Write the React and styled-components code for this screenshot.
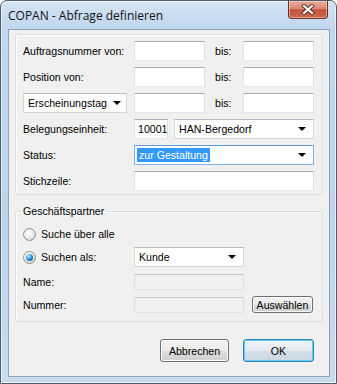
import styled, { createGlobalStyle } from "styled-components";

const GlobalStyle = createGlobalStyle`
  html, body { margin: 0; padding: 0; background: #fff; }
  body {
    font-family: "Liberation Sans", Arial, sans-serif;
    font-size: 10.6px;
    color: #000;
  }
`;

const Window = styled.div`
  width: 337px;
  height: 384px;
  box-sizing: border-box;
  display: flex;
  flex-direction: column;
  border: 1px solid #4f5b68;
  border-radius: 7px 7px 0 0;
  background: linear-gradient(180deg, #d4e4f4 0%, #c1d7ee 28px, #bdd4eb 60%, #c9dcef 100%);
  box-shadow: inset 0 0 0 1px rgba(255, 255, 255, 0.6);
  overflow: hidden;
`;

const TitleBar = styled.div`
  height: 28px;
  display: flex;
  align-items: flex-start;
  flex-shrink: 0;
`;

const Title = styled.div`
  align-self: center;
  padding-left: 7px;
  padding-top: 1px;
  font-family: "Open Sans", "Liberation Sans", sans-serif;
  font-size: 12px;
  color: #111;
`;

const CloseButton = styled.div`
  margin-left: auto;
  margin-right: 8px;
  width: 40px;
  height: 18px;
  box-sizing: border-box;
  border: 1px solid #6a3428;
  border-top: none;
  border-radius: 0 0 4px 4px;
  background: linear-gradient(180deg, #e8ad9e 0%, #d88a76 45%, #c5503a 52%, #cd6a50 100%);
  box-shadow: inset 0 0 0 1px rgba(255, 230, 220, 0.45);
  display: flex;
  align-items: center;
  justify-content: center;
`;

const Client = styled.div`
  flex: 1;
  margin: 0 6px 6px 7px;
  border: 1px solid #8ea3b9;
  background: #f0f0f0;
  padding: 4px 6px 0 6px;
  display: flex;
  flex-direction: column;
`;

const Group = styled.div`
  border: 1px solid #d5dfe5;
  border-radius: 3px;
  box-shadow: inset 1px 1px 0 #fff;
  padding: 6px 8px 3px 7px;
  display: grid;
  grid-template-columns: 111px 71px 38px 71px;
  grid-auto-rows: 20px;
  row-gap: 6px;
  align-items: center;
`;

const Fieldset = styled.fieldset`
  margin: 10px 0 0 0;
  border: 1px solid #d5dfe5;
  border-radius: 3px;
  box-shadow: inset 1px 1px 0 #fff;
  padding: 7px 8px 8px 7px;
  min-width: 0;
  display: flex;
  flex-direction: column;
`;

const Legend = styled.legend`
  padding: 0 2px;
  margin-left: -2px;
  line-height: 13px;
`;

const Label = styled.span`
  white-space: nowrap;
  padding-left: ${(p) => p.$indent || 0}px;
`;

const Input = styled.div`
  box-sizing: border-box;
  height: ${(p) => p.$h || 20}px;
  width: ${(p) => (p.$w ? `${p.$w}px` : "auto")};
  border: 1px solid;
  border-color: ${(p) => (p.$disabled ? "#c5c7ca #dcdfe3 #e2e5e8 #dcdfe3" : "#abadb3 #dbdfe6 #e3e9ef #e2e3ea")};
  background: ${(p) => (p.$disabled ? "#f0f0f0" : "#fff")};
  display: flex;
  align-items: center;
  padding-left: 3px;
  white-space: nowrap;
`;

const Combo = styled.div`
  box-sizing: border-box;
  height: 20px;
  width: ${(p) => (p.$w ? `${p.$w}px` : "auto")};
  flex: ${(p) => (p.$w ? "none" : 1)};
  border: 1px solid ${(p) => (p.$focused ? "#7eb4ea" : "#d3d7dc")};
  border-top-color: ${(p) => (p.$focused ? "#5d9bd8" : "#b8bcc2")};
  background: #fff;
  display: flex;
  align-items: center;
  padding: 0 7px 0 2px;
  white-space: nowrap;
`;

const ComboText = styled.span`
  padding: 1px 2px;
  background: ${(p) => (p.$selected ? "#3399ff" : "transparent")};
  color: ${(p) => (p.$selected ? "#fff" : "#000")};
  margin-right: auto;
`;

const Arrow = styled.span`
  width: 0;
  height: 0;
  border-left: 4px solid transparent;
  border-right: 4px solid transparent;
  border-top: 4px solid #000;
  margin-left: 4px;
`;

const SpanRow = styled.div`
  grid-column: 2 / 5;
  display: flex;
  gap: 6px;
`;

const Wide = styled.div`
  grid-column: 2 / 5;
`;

const Row = styled.div`
  display: grid;
  grid-template-columns: 111px 110px 8px 61px;
  align-items: center;
  height: ${(p) => p.$h}px;
  margin-top: ${(p) => p.$mt || 0}px;
`;

const RadioWrap = styled.label`
  display: flex;
  align-items: center;
  gap: 5px;
  white-space: nowrap;
`;

const RadioCircle = styled.span`
  box-sizing: border-box;
  width: 13px;
  height: 13px;
  border-radius: 50%;
  border: 1px solid #8f9092;
  background: radial-gradient(circle at 40% 35%, #ffffff 0%, #e6e6e6 55%, #cfcfcf 80%, #f2f2f2 100%);
  display: flex;
  align-items: center;
  justify-content: center;

  &::after {
    content: "";
    display: ${(p) => (p.$checked ? "block" : "none")};
    width: 7px;
    height: 7px;
    border-radius: 50%;
    background: radial-gradient(circle at 35% 30%, #b8ecff 0%, #3ea3e6 40%, #10579b 80%, #0c3f70 100%);
  }
`;

const Button = styled.div`
  box-sizing: border-box;
  width: ${(p) => p.$w}px;
  height: ${(p) => p.$h || 23}px;
  border: 1px solid ${(p) => (p.$default ? "#3c7fb1" : "#707070")};
  border-radius: 3px;
  background: ${(p) =>
    p.$default
      ? "linear-gradient(180deg, #eef4f8 0%, #e3ecf2 50%, #d4e0e8 51%, #c9d8e2 100%)"
      : "linear-gradient(180deg, #f2f2f2 0%, #ebebeb 50%, #dddddd 51%, #cfcfcf 100%)"};
  box-shadow: ${(p) => (p.$default ? "inset 0 0 0 1px #5fd0f7" : "inset 0 0 0 1px #fbfbfb")};
  display: flex;
  align-items: center;
  justify-content: center;
  white-space: nowrap;
`;

const ButtonRow = styled.div`
  display: flex;
  justify-content: flex-end;
  gap: 14px;
  margin-top: 17px;
  margin-right: 9px;
`;

function Radio({ checked, children }) {
  return (
    <RadioWrap>
      <RadioCircle $checked={checked} />
      {children}
    </RadioWrap>
  );
}

export default function App() {
  return (
    <>
      <GlobalStyle />
      <Window>
        <TitleBar>
          <Title>COPAN - Abfrage definieren</Title>
          <CloseButton>
            <svg width="14" height="11" viewBox="0 0 14 11">
              <path d="M3 2 L11 9 M11 2 L3 9" stroke="#5a2a20" strokeWidth="4" strokeLinecap="square" />
              <path d="M3 2 L11 9 M11 2 L3 9" stroke="#ffffff" strokeWidth="2.2" strokeLinecap="square" />
            </svg>
          </CloseButton>
        </TitleBar>
        <Client>
          <Group>
            <Label>Auftragsnummer von:</Label>
            <Input />
            <Label $indent={10}>bis:</Label>
            <Input />

            <Label>Position von:</Label>
            <Input />
            <Label $indent={10}>bis:</Label>
            <Input />

            <Combo $w={104}>
              <ComboText>Erscheinungstag</ComboText>
              <Arrow />
            </Combo>
            <Input />
            <Label $indent={10}>bis:</Label>
            <Input />

            <Label>Belegungseinheit:</Label>
            <SpanRow>
              <Input $w={34}>10001</Input>
              <Combo>
                <ComboText>HAN-Bergedorf</ComboText>
                <Arrow />
              </Combo>
            </SpanRow>

            <Label>Status:</Label>
            <SpanRow>
              <Combo $focused>
                <ComboText $selected>zur Gestaltung</ComboText>
                <Arrow />
              </Combo>
            </SpanRow>

            <Label>Stichzeile:</Label>
            <Wide>
              <Input />
            </Wide>
          </Group>

          <Fieldset>
            <Legend>Geschäftspartner</Legend>
            <Row $h={18}>
              <Radio>Suche über alle</Radio>
            </Row>
            <Row $h={20} $mt={4}>
              <Radio checked>Suchen als:</Radio>
              <Combo>
                <ComboText>Kunde</ComboText>
                <Arrow />
              </Combo>
            </Row>
            <Row $h={16} $mt={7}>
              <Label>Name:</Label>
              <Input $h={16} $disabled />
            </Row>
            <Row $h={17} $mt={6}>
              <Label>Nummer:</Label>
              <Input $h={16} $disabled />
              <span />
              <Button $w={61} $h={17}>Auswählen</Button>
            </Row>
          </Fieldset>

          <ButtonRow>
            <Button $w={69}>Abbrechen</Button>
            <Button $w={71} $default>OK</Button>
          </ButtonRow>
        </Client>
      </Window>
    </>
  );
}
